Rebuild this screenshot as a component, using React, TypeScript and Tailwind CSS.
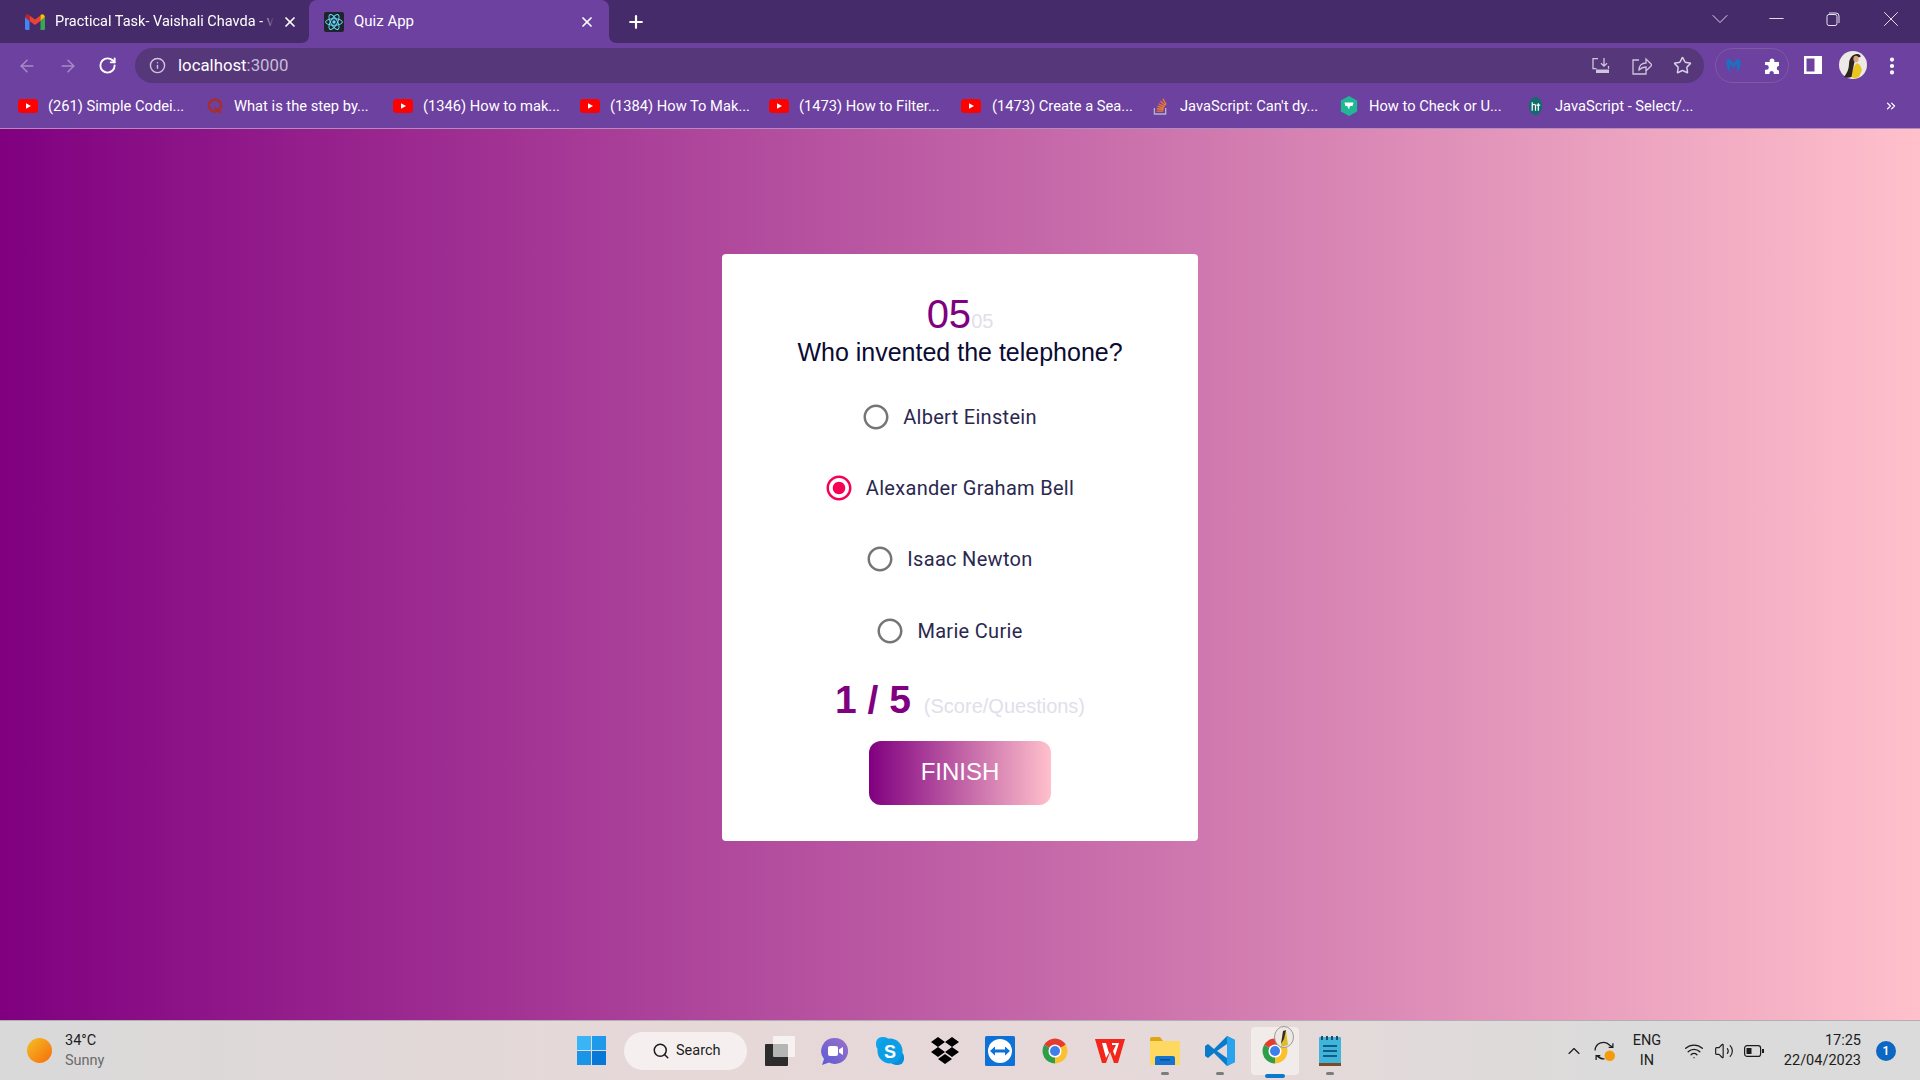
import React from "react";
import { ArrowLeft, ArrowRight, RotateCw, Info, Star, X, Plus, ChevronDown, Minus, ChevronUp, Search, Wifi, Volume2, EllipsisVertical, ChevronsRight } from "lucide-react";

const YT = () => (
  <svg viewBox="0 0 20 16" className="w-[20px] h-[16px] shrink-0">
    <rect x="0" y="1" width="20" height="14" rx="3.5" fill="#f00" />
    <path d="M8 5.2 13 8 8 10.8Z" fill="#fff" />
  </svg>
);
const Quora = () => (
  <svg viewBox="0 0 20 20" className="w-[18px] h-[20px] shrink-0">
    <circle cx="10" cy="9.5" r="6.8" fill="none" stroke="#a92d2b" strokeWidth="2.8" />
    <path d="M9 12c3 1 4 5 8 5" fill="none" stroke="#a92d2b" strokeWidth="2.4" />
  </svg>
);
const SO = () => (
  <svg viewBox="0 0 16 20" className="w-[15px] h-[20px] shrink-0">
    <path d="M1.5 12v6.5h12V12" fill="none" stroke="#b9b3c4" strokeWidth="1.4" />
    <path d="M4 15.5h7M4.2 13l7 .7M4.8 10.3l6.8 1.9M6 7.6l6.2 3.4M8 5l5.2 4.8M10.5 2.5l3.6 6" stroke="#ef7b2b" strokeWidth="1.5" fill="none" />
  </svg>
);
const Hex = () => (
  <svg viewBox="0 0 20 22" className="w-[18px] h-[22px] shrink-0">
    <path d="M10 0 19 5v12l-9 5-9-5V5Z" fill="#20b795" />
    <path d="M5 7h10l-1 4h-3l-1 4-2-4H6Z" fill="#fff" />
  </svg>
);
const GH = () => (
  <svg viewBox="0 0 16 20" className="w-[15px] h-[20px] shrink-0">
    <ellipse cx="8" cy="10" rx="7" ry="9.5" fill="#0f6d6a" />
    <path d="M4.5 15V6M4.5 10c1-2.5 3.5-2.5 3.5 0v5M11 7v8M9 9h4" stroke="#fff" strokeWidth="1.3" fill="none" />
  </svg>
);
const Chrome = () => (
  <svg viewBox="0 0 48 48" className="w-[30px] h-[30px]">
    <path d="M24 24 6.68 14A20 20 0 0 1 41.32 14Z" fill="#e33b2e" />
    <path d="M24 24 41.32 14A20 20 0 0 1 24 44Z" fill="#fbc02d" />
    <path d="M24 24 24 44A20 20 0 0 1 6.68 14Z" fill="#2f9e48" />
    <circle cx="24" cy="24" r="10.5" fill="#fff" />
    <circle cx="24" cy="24" r="8" fill="#3f7fec" />
  </svg>
);
const Flare = ({ side }: { side: "l" | "r" }) => (
  <svg viewBox="0 0 8 8" className={side === "l" ? "absolute bottom-0 -left-[8px] w-[8px] h-[8px]" : "absolute bottom-0 -right-[8px] w-[8px] h-[8px]"}>
    <path d={side === "l" ? "M8 0V8H0C5 8 8 5 8 0Z" : "M0 0V8H8C3 8 0 5 0 0Z"} fill="#6c41a0" />
  </svg>
);

const bookmarks = [
  { w: "w-[188px]", icon: <YT />, gap: "gap-[10px]", text: "(261) Simple Codei..." },
  { w: "w-[187px]", icon: <Quora />, gap: "gap-[10px]", text: "What is the step by..." },
  { w: "w-[187px]", icon: <YT />, gap: "gap-[10px]", text: "(1346) How to mak..." },
  { w: "w-[189px]", icon: <YT />, gap: "gap-[10px]", text: "(1384) How To Mak..." },
  { w: "w-[192px]", icon: <YT />, gap: "gap-[10px]", text: "(1473) How to Filter..." },
  { w: "w-[192px]", icon: <YT />, gap: "gap-[11px]", text: "(1473) Create a Sea..." },
  { w: "w-[187px]", icon: <SO />, gap: "gap-[12px]", text: "JavaScript: Can't dy..." },
  { w: "w-[188px]", icon: <Hex />, gap: "gap-[11px]", text: "How to Check or U..." },
  { w: "w-[180px]", icon: <GH />, gap: "gap-[12px]", text: "JavaScript - Select/..." },
];

const Option = ({ label, checked }: { label: string; checked?: boolean }) => (
  <label className="h-[71.33px] flex items-center justify-center gap-[12px] text-[20px] text-[#2b2850] font-['Roboto',sans-serif] tracking-[0.3px]">
    <svg viewBox="0 0 24 24" className="w-[30px] h-[30px]" fill={checked ? "#f50057" : "#757575"}>
      <path d="M12 2C6.48 2 2 6.48 2 12s4.48 10 10 10 10-4.48 10-10S17.52 2 12 2zm0 18c-4.42 0-8-3.58-8-8s3.58-8 8-8 8 3.58 8 8-3.58 8-8 8z" />
      {checked && <path d="M12 7c-2.76 0-5 2.24-5 5s2.24 5 5 5 5-2.24 5-5-2.24-5-5-5z" />}
    </svg>
    <span>{label}</span>
  </label>
);

const Slot = ({ children, dot }: { children: React.ReactNode; dot?: boolean }) => (
  <div className="relative w-[55px] h-full flex items-center justify-center">
    {children}
    {dot && <span className="absolute bottom-[5px] left-[23.5px] w-[8px] h-[3px] rounded-full bg-[#7c7c7c]" />}
  </div>
);

export default function App() {
  return (
    <div className="w-[1920px] h-[1080px] overflow-hidden flex flex-col font-['Roboto',sans-serif]">
      {/* tab strip */}
      <div className="h-[43px] shrink-0 bg-[#452b6a] flex text-white text-[15px]">
        <div className="w-[309px] flex items-center pl-[25px] pr-[11px]">
          <svg viewBox="0 0 20 16" className="w-[20px] h-[16px] shrink-0">
            <path d="M0 3v11.5A1.5 1.5 0 0 0 1.5 16H4.5V7Z" fill="#4285f4" />
            <path d="M20 3v11.5a1.5 1.5 0 0 1-1.5 1.5H15.5V7Z" fill="#34a853" />
            <path d="M4.5 7V1.5L10 5.5 15.5 1.5V7L10 11Z" fill="#ea4335" />
            <path d="M0 3 1 1c1-1 2.5-1 3.5 0V7Z" fill="#c5221f" />
            <path d="M20 3 19 1c-1-1-2.5-1-3.5 0V7Z" fill="#fbbc04" />
          </svg>
          <span className="ml-[10px] whitespace-nowrap text-[14.5px] [mask-image:linear-gradient(90deg,#000_94%,transparent)]">Practical Task- Vaishali Chavda - v</span>
          <X className="ml-auto w-[16px] h-[16px]" strokeWidth={2.6} />
        </div>
        <div className="relative w-[300px] h-full bg-[#6c41a0] rounded-t-[8px] flex items-center pl-[15px] pr-[14px]">
          <Flare side="l" />
          <Flare side="r" />
          <svg viewBox="0 0 20 20" className="w-[20px] h-[20px] shrink-0">
            <rect width="20" height="20" rx="2" fill="#20232a" />
            <g fill="none" stroke="#61dafb" strokeWidth="1">
              <ellipse cx="10" cy="10" rx="8.4" ry="3.3" />
              <ellipse cx="10" cy="10" rx="8.4" ry="3.3" transform="rotate(60 10 10)" />
              <ellipse cx="10" cy="10" rx="8.4" ry="3.3" transform="rotate(120 10 10)" />
            </g>
            <circle cx="10" cy="10" r="1.7" fill="#61dafb" />
          </svg>
          <span className="ml-[10px]">Quiz App</span>
          <X className="ml-auto w-[16px] h-[16px]" strokeWidth={2.6} />
        </div>
        <div className="w-[54px] flex items-center justify-center">
          <Plus className="w-[20px] h-[20px]" strokeWidth={2.6} />
        </div>
        <div className="flex-1 flex items-center justify-end pb-[6px] text-[#e8e3ef]">
          <ChevronDown className="w-[28px] h-[28px]" strokeWidth={0.8} />
          <Minus className="ml-[31px] w-[23px] h-[23px]" strokeWidth={1} />
          <svg viewBox="0 0 14 14" className="ml-[38px] w-[14px] h-[14px]" fill="none" stroke="currentColor">
            <rect x="1" y="2.5" width="10" height="11" rx="2" />
            <path d="M3 1h7a3 3 0 0 1 3 3v7" />
          </svg>
          <X className="ml-[38px] mr-[16px] w-[26px] h-[26px]" strokeWidth={0.9} />
        </div>
      </div>

      {/* toolbar */}
      <div className="h-[43px] shrink-0 bg-[#6c41a0] flex items-start pt-[5px] text-white">
        <div className="w-[135px] h-[35px] flex items-center pl-[17px]">
          <ArrowLeft className="w-[20px] h-[20px] text-[#a68bc8]" strokeWidth={1.8} />
          <ArrowRight className="ml-[21px] w-[20px] h-[20px] text-[#a68bc8]" strokeWidth={1.8} />
          <RotateCw className="ml-[20px] w-[19px] h-[19px]" strokeWidth={2.4} />
        </div>
        <div className="w-[1569px] h-[35px] rounded-full bg-[#56377a] flex items-center pl-[14px] pr-[12px]">
          <Info className="w-[17px] h-[17px] text-[#cfc6dc]" strokeWidth={2} />
          <span className="ml-[12px] text-[16.8px]">localhost<span className="text-[#c8bdd8]">:3000</span></span>
          <svg viewBox="0 0 18 18" className="ml-auto w-[18px] h-[18px]" fill="none" stroke="#cfc6dc" strokeWidth="1.3">
            <path d="M6 1.7H1v10h3.5M12 1v8M9 6.2 12 9.2 15 6.2M16.5 9v2.7" />
            <path d="M4 12.5h13v3.5H4Z" fill="#cfc6dc" stroke="none" />
          </svg>
          <svg viewBox="0 0 20 18" className="ml-[22px] w-[20px] h-[18px]" fill="none" stroke="#cfc6dc" strokeWidth="1.3">
            <path d="M7 3H1v14h13v-5M7 13c0-5 3-7 7-7V2l6 6-6 6v-4c-3 0-5 1-7 3Z" />
          </svg>
          <Star className="ml-[21px] w-[19px] h-[19px] text-[#d8d0e4]" strokeWidth={1.9} />
        </div>
        <div className="ml-[11px] w-[74px] h-[35px] rounded-full border border-[#80599f] flex items-center pl-[9px]">
          <svg viewBox="0 0 18 18" className="w-[17px] h-[17px]">
            <path d="M1.5 4 5 1.5 9 7 13 1.5 16.5 4C17 10 15 14 12 17 13 12 13 10 12.5 8L9 12 5.5 8C5 10 5 12 6 17 3 14 1 10 1.5 4Z" fill="#1f6fc0" />
          </svg>
          <svg viewBox="0 0 18 18" className="ml-[22px] w-[18px] h-[18px]" fill="#fff">
            <path d="M5.5 3.5a2.6 2.6 0 0 1 5 0l-.3 1.5H15v4h-.5a2.4 2.4 0 0 0 0 4.6h.5V17H9.8v-1.2a2.2 2.2 0 0 0-4.3 0V17H1v-4.2h1.4a2.4 2.4 0 0 0 0-4.8H1V5h4.8Z" />
          </svg>
        </div>
        <svg viewBox="0 0 18 18" className="ml-[15px] mt-[8px] w-[18px] h-[18px]">
          <path d="M0 0h18v18H0Z M2.5 2.5v13h8v-13Z" fill="#fff" fillRule="evenodd" />
        </svg>
        <svg viewBox="0 0 28 28" className="ml-[17px] mt-[3px] w-[28px] h-[28px] shrink-0">
          <circle cx="14" cy="14" r="14" fill="#ece9e6" />
          <path d="M12 26c1-5 2-9 4-12l2-2 3 2 2 5-3 7-4 1.5Z" fill="#e9c51f" />
          <path d="M5 26c3-4 5-8 5-13 0-6 4-10 8-10 3 0 4 2 3.5 3-3 0-5 2-6 5-1 4-2 9-3 15-3 1-5 1-7 0Z" fill="#2f2320" />
          <ellipse cx="17" cy="8" rx="2.6" ry="3.2" fill="#d9a587" />
        </svg>
        <EllipsisVertical className="ml-[14px] mt-[7px] w-[22px] h-[22px]" strokeWidth={2.6} />
      </div>

      {/* bookmarks */}
      <div className="h-[43px] shrink-0 bg-[#6c41a0] border-b border-[#b48ac0] flex items-center pl-[18px] pb-[2px] text-white text-[14.7px] leading-none">
        {bookmarks.map((b, i) => (
          <div key={i} className={`${b.w} flex items-center ${b.gap} whitespace-nowrap`}>
            {b.icon}
            <span>{b.text}</span>
          </div>
        ))}
        <ChevronsRight className="ml-auto mr-[22px] w-[14px] h-[14px]" strokeWidth={2.2} />
      </div>

      {/* page */}
      <main className="flex-1 bg-[linear-gradient(90deg,#800080,#ffc0cb)] pt-[125px]">
        <div className="mx-auto w-[476px] rounded-[4px] bg-white flex flex-col items-center pt-[37px] pb-[36px] font-['Liberation_Sans',Arial,sans-serif]">
          <div className="h-[46px] leading-[46px] text-[40px] text-[#800080] whitespace-nowrap">
            05<span className="text-[20px] text-[#e0e0ea]">05</span>
          </div>
          <h2 className="h-[30px] leading-[30px] text-[25px] text-[#0b0b33]">Who invented the telephone?</h2>
          <div className="mt-[14px] w-full flex flex-col pr-[22px]">
            <Option label="Albert Einstein" />
            <Option label="Alexander Graham Bell" checked />
            <Option label="Isaac Newton" />
            <Option label="Marie Curie" />
          </div>
          <div className="mt-[10px] h-[46px] flex items-baseline gap-[13px] leading-[46px] whitespace-nowrap translate-y-[1px]">
            <span className="text-[39px] font-bold text-[#800080]">1 / 5</span>
            <span className="text-[20px] text-[#e0e0ea]">(Score/Questions)</span>
          </div>
          <button className="mt-[19px] w-[182px] h-[64px] rounded-[12px] pb-[2px] bg-[linear-gradient(90deg,#800080,#ffc0cb)] text-white text-[24px]">FINISH</button>
        </div>
      </main>

      {/* taskbar */}
      <footer className="h-[60px] shrink-0 border-t border-[#b5adb5] bg-[linear-gradient(90deg,#d9d9d9,#e7d8d8_35%,#e6d9d9_65%,#dbdbdb_85%)] flex items-center text-[14.5px] text-[#1c1c1c]">
        <div className="w-[572px] h-full flex items-center pl-[27px]">
          <span className="w-[25px] h-[25px] rounded-full bg-[linear-gradient(135deg,#f4c025,#f76b0a)]" />
          <div className="ml-[13px] flex flex-col leading-[20px]">
            <span>34°C</span>
            <span className="text-[#6b6b6b]">Sunny</span>
          </div>
        </div>
        <div className="w-[52px] h-full flex items-center">
          <svg viewBox="0 0 29 29" className="ml-[5px] w-[29px] h-[29px]">
            <rect width="14" height="14" fill="#39b4f4" />
            <rect x="15" width="14" height="14" fill="#1f9aeb" />
            <rect y="15" width="14" height="14" fill="#1a94e6" />
            <rect x="15" y="15" width="14" height="14" fill="#0878d8" />
          </svg>
        </div>
        <div className="w-[123px] h-[38px] rounded-full bg-[#f5f0ef] flex items-center pl-[28px] gap-[6px]">
          <Search className="w-[18px] h-[18px]" strokeWidth={2} />
          <span>Search</span>
        </div>
        <div className="w-[5px]" />
        <Slot>
          <svg viewBox="0 0 30 30" className="w-[30px] h-[30px]">
            <rect x="0" y="8" width="23" height="22" rx="1" fill="#2c2c2c" />
            <rect x="8" y="0" width="22" height="21" rx="1" fill="#ffffff" fillOpacity="0.65" />
          </svg>
        </Slot>
        <Slot>
          <svg viewBox="0 0 28 28" className="w-[28px] h-[28px]">
            <defs>
              <linearGradient id="chatg" x1="0" y1="1" x2="1" y2="0">
                <stop offset="0" stopColor="#5b5bd6" />
                <stop offset="1" stopColor="#9a72c8" />
              </linearGradient>
            </defs>
            <path d="M14 1a13 13 0 1 1-6 24.5L1 28l2-6A13 13 0 0 1 14 1Z" fill="url(#chatg)" />
            <rect x="7" y="9" width="10" height="10" rx="2" fill="#fff" />
            <path d="M18 12.5 22 10v8l-4-2.5Z" fill="#fff" />
          </svg>
        </Slot>
        <Slot>
          <svg viewBox="0 0 28 28" className="w-[28px] h-[28px]">
            <rect x="0" y="0" width="14" height="14" rx="6" fill="#0ea5e9" />
            <rect x="14" y="14" width="14" height="14" rx="6" fill="#0b8ed8" />
            <circle cx="14" cy="14" r="12.5" fill="#0b9ee6" />
            <text x="14" y="20.5" textAnchor="middle" fontSize="18" fontWeight="700" fill="#fff" fontFamily="Liberation Sans, sans-serif">S</text>
          </svg>
        </Slot>
        <Slot>
          <svg viewBox="0 0 30 28" className="w-[30px] h-[28px]" fill="#000">
            <path d="M8 0 15 5 8 10 1 5ZM22 0 29 5 22 10 15 5ZM8 10 15 15 8 20 1 15ZM22 10 29 15 22 20 15 15ZM15 17 22 22 15 27 8 22Z" />
          </svg>
        </Slot>
        <Slot>
          <svg viewBox="0 0 30 30" className="w-[30px] h-[30px]">
            <rect width="30" height="30" rx="1.5" fill="#0e71d5" />
            <circle cx="15" cy="15" r="12" fill="#fff" />
            <path d="M5 15 10 10.5V13.5H20V10.5L25 15 20 19.5V16.5H10V19.5Z" fill="#0e71d5" />
          </svg>
        </Slot>
        <Slot><Chrome /></Slot>
        <Slot>
          <svg viewBox="0 0 30 26" className="w-[30px] h-[26px]">
            <path d="M0 1h30l-7 24h-4l-4-11-4 11H7Z" fill="#f2261b" />
            <path d="M7 5h4l3 10-3 5ZM17 5h7l-4 13-2-5 3-6h-4Z" fill="#fff" />
          </svg>
        </Slot>
        <Slot dot>
          <svg viewBox="0 0 30 28" className="w-[30px] h-[28px]">
            <path d="M0 2a2 2 0 0 1 2-2h8l3 4H0Z" fill="#e2a512" />
            <rect y="4" width="30" height="24" rx="1" fill="#fdd961" />
            <path d="M5 21a2 2 0 0 1 2-2h16a2 2 0 0 1 2 2v7H5Z" fill="#1474cf" />
            <rect x="10" y="22" width="10" height="1.5" fill="#0b4f94" />
          </svg>
        </Slot>
        <Slot dot>
          <svg viewBox="0 0 30 30" className="w-[30px] h-[30px]">
            <path d="M22 0 30 4V26L22 30 9 17 3 22 0 20V10L3 8 9 13Z" fill="#0a7acb" />
            <path d="M22 0 30 4V26L22 30Z" fill="#28a4ef" />
            <path d="M22 8V22L12 15Z" fill="#e6d8d8" />
          </svg>
        </Slot>
        <div className="relative w-[55px] h-full flex items-center justify-center">
          <div className="w-[48px] h-[48px] rounded-[4px] bg-[#f1ebea] flex items-center justify-center">
            <Chrome />
          </div>
          <svg viewBox="0 0 20 22" className="absolute top-[5px] right-[8px] w-[20px] h-[22px]">
            <ellipse cx="10" cy="11" rx="9.5" ry="10.5" fill="#eee8e4" stroke="#9a9a9a" />
            <path d="M7 21 9 6l3-1 2 14Z" fill="#d9bd2a" />
            <path d="M7 18 9 5l3-1-2 9Z" fill="#3a2a22" />
          </svg>
          <span className="absolute bottom-[2px] left-[18px] w-[20px] h-[4px] rounded-full bg-[#0b79d0]" />
        </div>
        <Slot dot>
          <svg viewBox="0 0 22 30" className="w-[22px] h-[30px]">
            <rect y="1" width="22" height="27" rx="1" fill="#41b4dc" />
            <rect y="27" width="22" height="3" fill="#7d4a26" />
            <path d="M3 0v4M8 0v4M13 0v4M18 0v4" stroke="#174f6b" strokeWidth="2" />
            <path d="M4 10h14M4 15h14M4 20h14" stroke="#0e5e86" strokeWidth="2" />
          </svg>
        </Slot>
        <div className="flex-1 h-full flex items-center pl-[207px]">
          <ChevronUp className="w-[20px] h-[20px]" strokeWidth={1.4} />
          <svg viewBox="0 0 20 20" className="ml-[10px] w-[21px] h-[21px]" fill="none" stroke="#1c1c1c" strokeWidth="1.2">
            <path d="M1 10a8 8 0 0 1 14-5l3 2M18 3v4h-4M10 18a8 8 0 0 1-7-3M2 19v-4h4" />
            <circle cx="15" cy="15" r="5" fill="#f59b0b" stroke="none" />
          </svg>
          <div className="ml-[14px] w-[36px] text-center leading-[20px]">ENG<br />IN</div>
          <Wifi className="ml-[19px] w-[20px] h-[20px]" strokeWidth={1.6} />
          <Volume2 className="ml-[10px] w-[20px] h-[20px]" strokeWidth={1.4} />
          <svg viewBox="0 0 20 12" className="ml-[10px] w-[20px] h-[12px]" fill="none" stroke="#1c1c1c" strokeWidth="1.2">
            <rect x="0.6" y="0.6" width="16" height="10.8" rx="2.5" />
            <rect x="2.5" y="3" width="5" height="6" fill="#1c1c1c" stroke="none" />
            <rect x="18" y="4" width="2" height="4" fill="#1c1c1c" stroke="none" />
          </svg>
          <div className="ml-[19px] w-[78px] leading-[20px] whitespace-nowrap flex flex-col items-end">
            <span>17:25</span>
            <span>22/04/2023</span>
          </div>
          <span className="ml-[15px] w-[20px] h-[20px] rounded-full bg-[#0b67c2] text-white text-[12px] font-semibold flex items-center justify-center">1</span>
        </div>
      </footer>
    </div>
  );
}
